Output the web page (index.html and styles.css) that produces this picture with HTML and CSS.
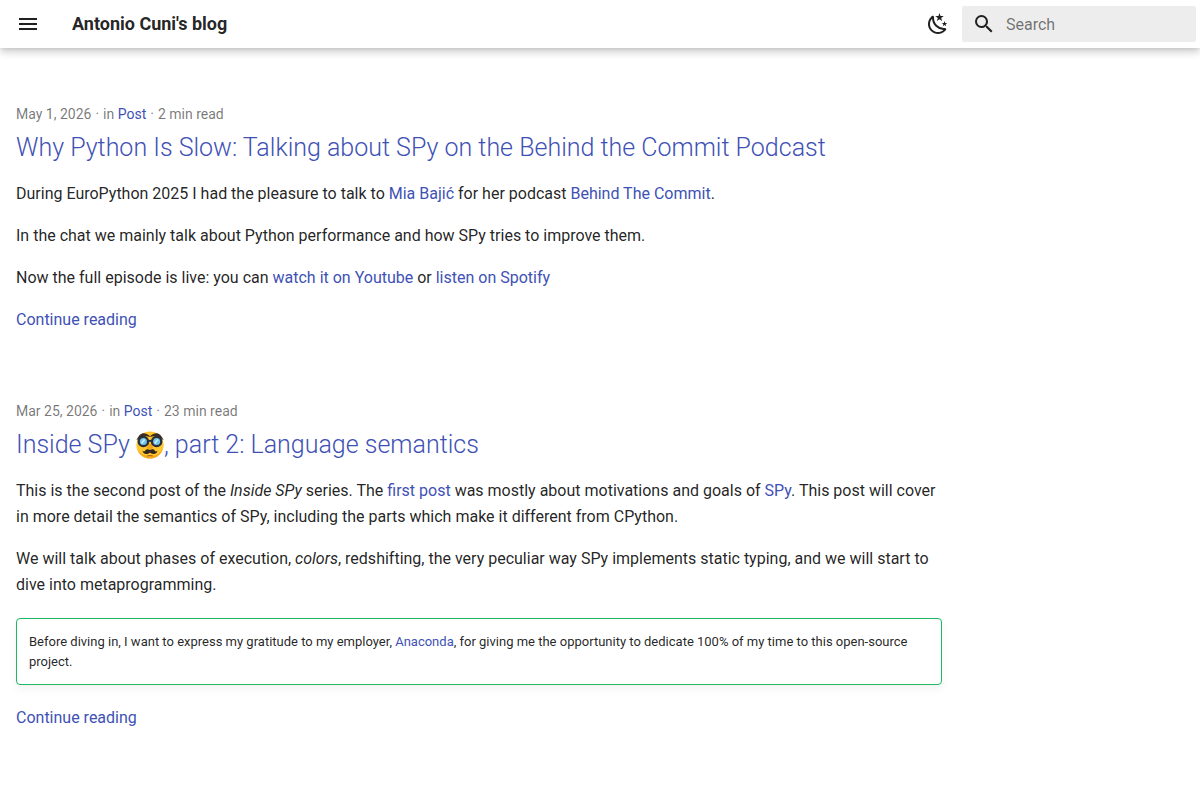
FILE: index.html
```
<!DOCTYPE html>
<html lang="en">
<head>
  <meta charset="UTF-8">
  <title>Antonio Cuni's blog</title>
  <meta name="viewport" content="width=device-width, initial-scale=1.0">
  <link rel="stylesheet" href="styles.css">
</head>
<body>
  <header class="header">
    <button class="icon-btn" type="button" aria-label="Menu">
      <svg class="icon" viewBox="0 0 24 24"><path d="M3 6h18v2H3V6m0 5h18v2H3v-2m0 5h18v2H3v-2Z"/></svg>
    </button>
    <a class="site-title" href="#">Antonio Cuni's blog</a>
    <button class="icon-btn palette-btn" type="button" aria-label="Switch to dark mode">
      <svg class="icon" viewBox="0 0 24 24"><path d="m17.75 4.09-2.53 1.94.91 3.06-2.63-1.81-2.63 1.81.91-3.06-2.53-1.94L12.44 4l1.06-3 1.06 3 3.19.09m3.5 6.91-1.64 1.25.59 1.98-1.7-1.17-1.7 1.17.59-1.98L15.75 11l2.06-.05L18.5 9l.69 1.95 2.06.05m-2.28 4.95c.83-.08 1.72 1.1 1.19 1.85-.32.45-.66.87-1.08 1.27C15.17 23 8.84 23 4.94 19.07c-3.91-3.9-3.91-10.24 0-14.14.4-.4.82-.76 1.27-1.08.75-.53 1.93.36 1.85 1.19-.27 2.86.69 5.83 2.89 8.02a9.96 9.96 0 0 0 8.02 2.89m-1.64 2.02a12.08 12.08 0 0 1-7.8-3.47c-2.17-2.19-3.33-5-3.49-7.82-2.81 3.14-2.7 7.96.31 10.98 3.02 3.01 7.84 3.12 10.98.31Z"/></svg>
    </button>
    <form class="search">
      <label class="search-label" for="search" aria-label="Search">
        <svg class="icon" viewBox="0 0 24 24"><path d="M9.5 3A6.5 6.5 0 0 1 16 9.5c0 1.61-.59 3.09-1.56 4.23l.27.27h.79l5 5-1.5 1.5-5-5v-.79l-.27-.27A6.516 6.516 0 0 1 9.5 16 6.5 6.5 0 0 1 3 9.5 6.5 6.5 0 0 1 9.5 3m0 2C7 5 5 7 5 9.5S7 14 9.5 14 14 12 14 9.5 12 5 9.5 5Z"/></svg>
      </label>
      <input class="search-input" id="search" type="text" placeholder="Search">
    </form>
  </header>

  <main class="posts">
    <article class="post">
      <ul class="meta">
        <li>May 1, 2026</li>
        <li>in <a href="#">Post</a></li>
        <li>2 min read</li>
      </ul>
      <h2><a href="#">Why Python Is Slow: Talking about SPy on the Behind the Commit Podcast</a></h2>
      <p>During EuroPython 2025 I had the pleasure to talk to <a href="#">Mia Bajić</a> for her podcast <a href="#">Behind The Commit</a>.</p>
      <p>In the chat we mainly talk about Python performance and how SPy tries to improve them.</p>
      <p>Now the full episode is live: you can <a href="#">watch it on Youtube</a> or <a href="#">listen on Spotify</a></p>
      <p><a href="#">Continue reading</a></p>
    </article>

    <article class="post">
      <ul class="meta">
        <li>Mar 25, 2026</li>
        <li>in <a href="#">Post</a></li>
        <li>23 min read</li>
      </ul>
      <h2><a href="#">Inside SPy <svg class="emoji" viewBox="0 0 36 36" role="img" aria-label="disguised face">
        <circle cx="18" cy="18" r="17.5" fill="#ffc62e"/>
        <path d="M1.500 23c3 8 9 12.500 16.500 12.500S31.500 31 34.500 23c-4 6-9.500 9-16.500 9S5.500 29 1.500 23Z" fill="#f7a81f"/>
        <path d="M3 9C6 3 11 2.500 15.500 6c-4.500-.5-8 0-12.500 3ZM33 9C30 3 25 2.500 20.500 6c4.500-.5 8 0 12.500 3Z" fill="#3b2a22" stroke="#3b2a22" stroke-width="2"/>
        <path d="M15 14q3-3 6 0" fill="none" stroke="#2b3036" stroke-width="2.500"/>
        <path d="M16 16h4l2 6q-4 3-8 0Z" fill="#f5a51c"/>
        <circle cx="9.500" cy="13.500" r="6" fill="#74c6ea" stroke="#2b3036" stroke-width="3"/>
        <circle cx="26.500" cy="13.500" r="6" fill="#74c6ea" stroke="#2b3036" stroke-width="3"/>
        <path d="m7 16 4-5M24 16l4-5" stroke="#c9eefb" stroke-width="2"/>
        <path d="M18 24.500c-3-2-5-1-6 .5-1 1.500-2 1.500-3.500.5 0 3 3 4.500 5.500 4 2-.3 3-1 4-2 1 1 2 1.700 4 2 2.500.5 5.500-1 5.500-4-1.500 1-2.500 1-3.500-.5-1-1.500-3-2.500-6-.5Z" fill="#33261f"/>
        <path d="M15 32q3-1 6 0" fill="none" stroke="#a56a1c" stroke-width="1.500" stroke-linecap="round"/>
      </svg>, part 2: Language semantics</a></h2>
      <p>This is the second post of the <em>Inside SPy</em> series. The <a href="#">first post</a> was mostly about motivations and goals of <a href="#">SPy</a>. This post will cover in more detail the semantics of SPy, including the parts which make it different from CPython.</p>
      <p>We will talk about phases of execution, <em>colors</em>, redshifting, the very peculiar way SPy implements static typing, and we will start to dive into metaprogramming.</p>
      <div class="admonition">Before diving in, I want to express my gratitude to my employer, <a href="#">Anaconda</a>, for giving me the opportunity to dedicate 100% of my time to this open-source project.</div>
      <p><a href="#">Continue reading</a></p>
    </article>
  </main>
</body>
</html>
```
FILE: styles.css
```
* { box-sizing: border-box; }
body {
  margin: 0;
  font: 16px/26px Roboto, "Liberation Sans", sans-serif;
  color: rgba(0,0,0,0.87);
  background: #fff;
}
a { color: #4051b5; text-decoration: none; }
a:hover { color: #526cfe; }

/* Header */
.header {
  position: sticky; top: 0; z-index: 1;
  display: flex; align-items: center;
  height: 48px;
  padding: 0 4px 0 8px;
  background: #fff;
  box-shadow: 0 0 4px rgba(0,0,0,0.1), 0 4px 8px rgba(0,0,0,0.2);
}
.icon { display: block; width: 24px; height: 24px; fill: currentColor; }
.icon-btn {
  padding: 8px; border: none; background: none;
  color: rgba(0,0,0,0.87); cursor: pointer;
}
.site-title {
  flex: 1;
  margin-left: 24px;
  font-size: 18px; font-weight: 700;
  color: rgba(0,0,0,0.87);
}
.palette-btn { margin-right: 4px; }
.search {
  display: flex; align-items: center;
  width: 234px; height: 36px;
  background: #ededed;
  border-radius: 2px;
}
.search-label { padding: 0 10px; }
.search-input {
  flex: 1; min-width: 0; height: 36px;
  padding: 0; border: none; outline: none;
  background: none; font: inherit;
}
.search-input::placeholder { color: rgba(0,0,0,0.54); }

/* Posts */
.posts {
  display: flex; flex-direction: column; gap: 51px;
  max-width: 958px;
  padding: 55px 16px 32px;
}
.post p { margin: 0 0 16px; }
.meta {
  display: flex; flex-wrap: wrap;
  margin: 0; padding: 0; list-style: none;
  font-size: 14px; line-height: 22px;
  color: rgba(0,0,0,0.54);
}
.meta li + li::before { content: "·"; margin: 0 4px; }
.post h2 {
  margin: 6px 0 16px;
  font-size: 25px; line-height: 34px; font-weight: 300;
}
.emoji { width: 28px; height: 28px; vertical-align: -6px; }
.admonition {
  margin: 20px 0;
  padding: 13px 12px 12px;
  font-size: 13px; line-height: 20px;
  border: 1px solid #1db965;
  border-radius: 4px;
  box-shadow: 0 4px 10px rgba(0,0,0,0.05), 0 0 1px rgba(0,0,0,0.1);
}
```
